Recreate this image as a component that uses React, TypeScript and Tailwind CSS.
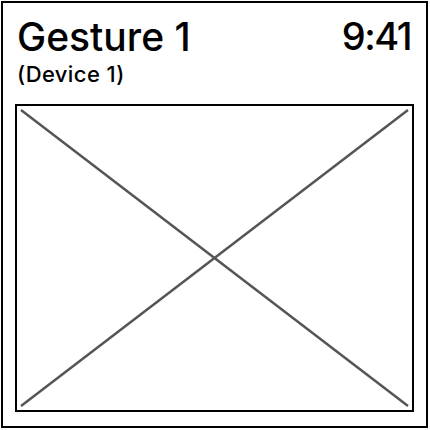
import React from 'react';

const sketchFont = { fontFamily: 'Inter, "Liberation Sans", Arial, sans-serif' };

function PlaceholderImage() {
  return (
    <div className="relative flex-1 border-2 border-black bg-white">
      <svg
        className="absolute inset-0 h-full w-full"
        viewBox="0 0 395 305"
        preserveAspectRatio="none"
      >
        <line x1="4" y1="4" x2="391" y2="301" stroke="#555555" strokeWidth="2.5" vectorEffect="non-scaling-stroke" />
        <line x1="391" y1="4" x2="4" y2="301" stroke="#555555" strokeWidth="2.5" vectorEffect="non-scaling-stroke" />
      </svg>
    </div>
  );
}

export default function App() {
  return (
    <div className="h-[430px] w-[430px] bg-white p-px" style={sketchFont}>
      <div className="flex h-[427px] w-[427px] flex-col border-2 border-black px-3 pb-[14px] pt-[14px]">
        <div className="flex items-start justify-between pl-[2px] pr-[3px]">
          <div>
            <div className="text-[39px] font-medium leading-none text-black">Gesture 1</div>
            <div className="mt-[7px] text-[22px] font-medium leading-none tracking-[0.4px] text-black">(Device 1)</div>
          </div>
          <div className="text-[38px] font-medium leading-none tracking-[-1.5px] text-black">9:41</div>
        </div>
        <div className="mt-[19px] flex flex-1">
          <PlaceholderImage />
        </div>
      </div>
    </div>
  );
}
